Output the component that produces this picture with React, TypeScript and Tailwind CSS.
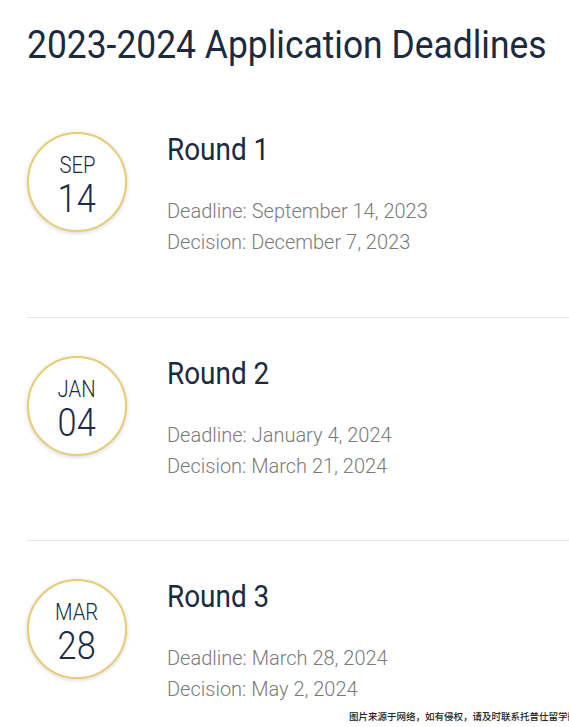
import React from "react";

const rounds = [
  { mon: "SEP", day: "14", title: "Round 1", deadline: "Deadline: September 14, 2023", decision: "Decision: December 7, 2023" },
  { mon: "JAN", day: "04", title: "Round 2", deadline: "Deadline: January 4, 2024", decision: "Decision: March 21, 2024" },
  { mon: "MAR", day: "28", title: "Round 3", deadline: "Deadline: March 28, 2024", decision: "Decision: May 2, 2024" },
];

export default function App() {
  return (
    <div className="w-[569px] h-[727px] overflow-hidden bg-white relative" style={{ fontFamily: "Roboto, sans-serif" }}>
      <div className="pl-[27px] pt-[22px]">
        <h1 className="text-[38px] leading-[46px] text-[#1c2a3f] font-normal whitespace-nowrap origin-left scale-x-[0.932]">2023-2024 Application Deadlines</h1>
      </div>
      <div className="pl-[27px] mt-[27px]">
        {rounds.map((r, i) => (
          <div key={i} className={i > 0 ? "border-t border-[#e6e6e6]" : ""}>
            <div className={`flex ${i > 0 ? "pt-[38px]" : "pt-[37px]"} h-[222px]`}>
              <div className="w-[100px] h-[100px] rounded-full border-2 border-[#e8cb73] shadow-[0_1px_4px_rgba(0,0,0,0.18)] bg-white flex flex-col items-center justify-center shrink-0 text-[#1c2a3f] font-light pt-[8px]">
                <div className="text-[23px] leading-[25px] scale-x-[0.88]">{r.mon}</div>
                <div className="text-[39px] leading-[40px] mt-[1px] scale-x-[0.88]">{r.day}</div>
              </div>
              <div className="ml-[40px] -mt-[1px]">
                <div className="text-[31px] leading-[38px] text-[#1c2a3f] origin-left scale-x-[0.9]">{r.title}</div>
                <div className="mt-[27px] text-[20px] leading-[31px] text-[#7a7a7a] font-light">
                  <div>{r.deadline}</div>
                  <div>{r.decision}</div>
                </div>
              </div>
            </div>
          </div>
        ))}
      </div>
      <div className="absolute left-[349px] top-[709px] text-[9.5px] leading-[14px] text-[#222] font-medium whitespace-nowrap" style={{ fontFamily: '"Noto Sans CJK SC", sans-serif' }}>
        图片来源于网络，如有侵权，请及时联系托普仕留学删除
      </div>
    </div>
  );
}
